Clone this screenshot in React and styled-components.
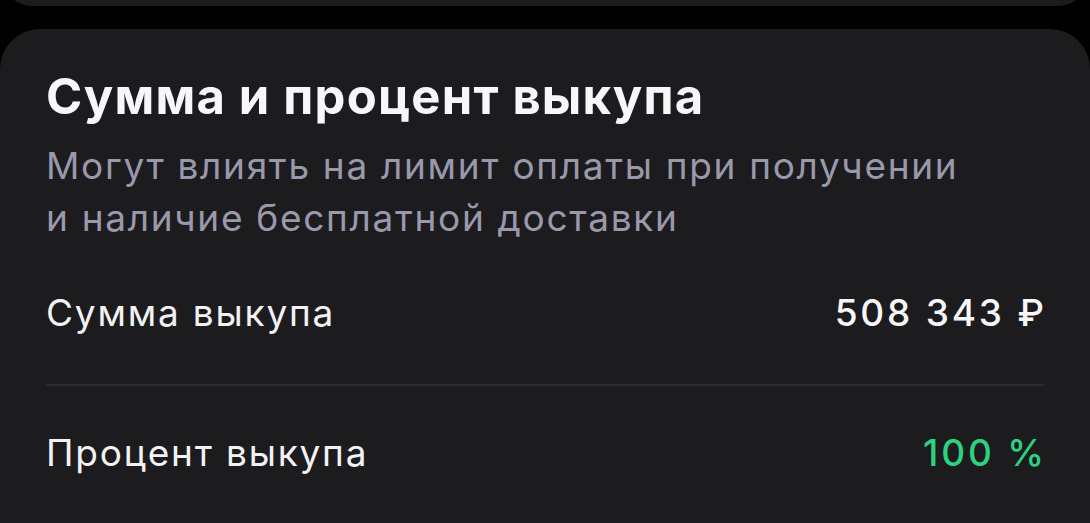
import React from "react";
import styled, { createGlobalStyle } from "styled-components";

const GlobalStyle = createGlobalStyle`
  html, body {
    margin: 0;
    padding: 0;
    background: #000;
    overflow: hidden;
  }
  body {
    font-family: Inter, "Noto Sans", Roboto, sans-serif;
    -webkit-font-smoothing: antialiased;
  }
`;

const Screen = styled.div`
  display: flex;
  flex-direction: column;
  gap: 23px;
  margin-top: -60px;
  height: 583px;
  overflow: hidden;
`;

const Card = styled.section`
  background: #1c1c1f;
  border-radius: 40px;
  flex-shrink: 0;
`;

const PrevCard = styled(Card)`
  height: 66px;
`;

const MainCard = styled(Card)`
  padding: 39px 46px 40px 46px;
  min-height: 500px;
`;

const Title = styled.h2`
  margin: 0;
  font-size: 49px;
  line-height: 58px;
  font-weight: 700;
  color: #f7f7f9;
  letter-spacing: 1.2px;
`;

const Subtitle = styled.p`
  margin: 14px 0 0;
  font-size: 37px;
  line-height: 52px;
  font-weight: 400;
  color: #9a99ac;
  letter-spacing: 1.7px;
`;

const Row = styled.div`
  display: flex;
  align-items: center;
  justify-content: space-between;
  padding: ${(p) => (p.$first ? "47px 0 49px" : "45px 0 0")};
`;

const Label = styled.span`
  font-size: 37px;
  line-height: 44px;
  color: #f2f2f4;
  letter-spacing: 1.8px;
`;

const Value = styled.span`
  font-size: 37px;
  line-height: 44px;
  font-weight: 500;
  color: ${(p) => p.$color || "#f7f7f9"};
  letter-spacing: 2.8px;
  margin-right: -2.8px;
`;

const Divider = styled.hr`
  margin: 0;
  border: none;
  height: 2px;
  background: #2c2c30;
`;

export default function App() {
  return (
    <>
      <GlobalStyle />
      <Screen>
        <PrevCard />
        <MainCard>
          <Title>Сумма и процент выкупа</Title>
          <Subtitle>
            Могут влиять на лимит оплаты при получении
            <br />и наличие бесплатной доставки
          </Subtitle>
          <Row $first>
            <Label>Сумма выкупа</Label>
            <Value>508 343 ₽</Value>
          </Row>
          <Divider />
          <Row>
            <Label>Процент выкупа</Label>
            <Value $color="#2bd27f">100 %</Value>
          </Row>
        </MainCard>
      </Screen>
    </>
  );
}
